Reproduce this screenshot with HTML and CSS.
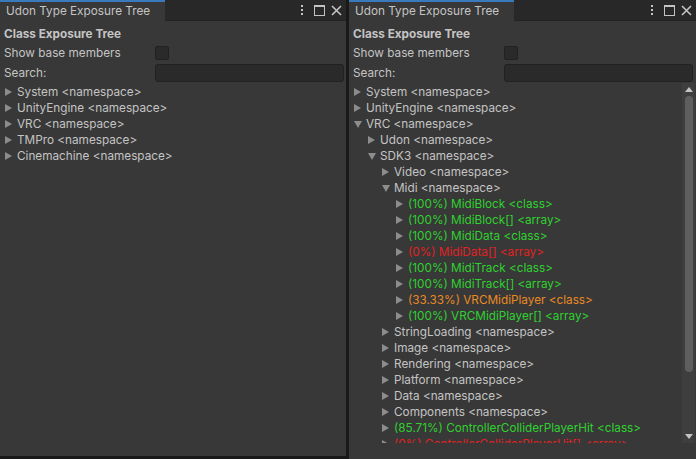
FILE: index.html
```html
<!DOCTYPE html>
<html lang="en">
<head>
    <meta charset="UTF-8">
    <title>Udon Type Exposure Tree</title>
    <link rel="stylesheet" href="styles.css">
</head>
<body>

    <div class="panel left">
        <div class="tabbar">
            <div class="tab">Udon Type Exposure Tree</div>
            <div class="tab-icons">
                <span class="kebab"><i></i><i></i><i></i></span>
                <span class="maxbox"></span>
                <svg class="close" width="11" height="11" viewBox="0 0 11 11"><path d="M1 1 L10 10 M10 1 L1 10" stroke="#c4c4c4" stroke-width="1.6"/></svg>
            </div>
        </div>
        <div class="content">
            <div class="title">Class Exposure Tree</div>
            <div class="field-row"><span class="label">Show base members</span><span class="checkbox"></span></div>
            <div class="field-row search"><span class="label">Search:</span><span class="textbox"></span></div>
            <div class="tree">
                <div class="node l0"><span class="arrow"></span>System &lt;namespace&gt;</div>
                <div class="node l0"><span class="arrow"></span>UnityEngine &lt;namespace&gt;</div>
                <div class="node l0"><span class="arrow"></span>VRC &lt;namespace&gt;</div>
                <div class="node l0"><span class="arrow"></span>TMPro &lt;namespace&gt;</div>
                <div class="node l0"><span class="arrow"></span>Cinemachine &lt;namespace&gt;</div>
            </div>
        </div>
    </div>

    <div class="divider"></div>

    <div class="panel right">
        <div class="tabbar">
            <div class="tab">Udon Type Exposure Tree</div>
            <div class="tab-icons">
                <span class="kebab"><i></i><i></i><i></i></span>
                <span class="maxbox"></span>
                <svg class="close" width="11" height="11" viewBox="0 0 11 11"><path d="M1 1 L10 10 M10 1 L1 10" stroke="#c4c4c4" stroke-width="1.6"/></svg>
            </div>
        </div>
        <div class="content">
            <div class="title">Class Exposure Tree</div>
            <div class="field-row"><span class="label">Show base members</span><span class="checkbox"></span></div>
            <div class="field-row search"><span class="label">Search:</span><span class="textbox"></span></div>
            <div class="tree-wrap">
                <div class="tree scroll">
                    <div class="node l0"><span class="arrow"></span>System &lt;namespace&gt;</div>
                    <div class="node l0"><span class="arrow"></span>UnityEngine &lt;namespace&gt;</div>
                    <div class="node l0"><span class="arrow open"></span>VRC &lt;namespace&gt;</div>
                    <div class="node l1"><span class="arrow"></span>Udon &lt;namespace&gt;</div>
                    <div class="node l1"><span class="arrow open"></span>SDK3 &lt;namespace&gt;</div>
                    <div class="node l2"><span class="arrow"></span>Video &lt;namespace&gt;</div>
                    <div class="node l2"><span class="arrow open"></span>Midi &lt;namespace&gt;</div>
                    <div class="node l3 ok"><span class="arrow"></span>(100%) MidiBlock &lt;class&gt;</div>
                    <div class="node l3 ok"><span class="arrow"></span>(100%) MidiBlock[] &lt;array&gt;</div>
                    <div class="node l3 ok"><span class="arrow"></span>(100%) MidiData &lt;class&gt;</div>
                    <div class="node l3 bad"><span class="arrow"></span>(0%) MidiData[] &lt;array&gt;</div>
                    <div class="node l3 ok"><span class="arrow"></span>(100%) MidiTrack &lt;class&gt;</div>
                    <div class="node l3 ok"><span class="arrow"></span>(100%) MidiTrack[] &lt;array&gt;</div>
                    <div class="node l3 part"><span class="arrow"></span>(33.33%) VRCMidiPlayer &lt;class&gt;</div>
                    <div class="node l3 ok"><span class="arrow"></span>(100%) VRCMidiPlayer[] &lt;array&gt;</div>
                    <div class="node l2"><span class="arrow"></span>StringLoading &lt;namespace&gt;</div>
                    <div class="node l2"><span class="arrow"></span>Image &lt;namespace&gt;</div>
                    <div class="node l2"><span class="arrow"></span>Rendering &lt;namespace&gt;</div>
                    <div class="node l2"><span class="arrow"></span>Platform &lt;namespace&gt;</div>
                    <div class="node l2"><span class="arrow"></span>Data &lt;namespace&gt;</div>
                    <div class="node l2"><span class="arrow"></span>Components &lt;namespace&gt;</div>
                    <div class="node l2 ok"><span class="arrow"></span>(85.71%) ControllerColliderPlayerHit &lt;class&gt;</div>
                    <div class="node l2 bad"><span class="arrow"></span>(0%) ControllerColliderPlayerHit[] &lt;array&gt;</div>
                </div>
                <div class="scrollbar">
                    <span class="sb-up"></span>
                    <span class="sb-thumb"></span>
                    <span class="sb-down"></span>
                </div>
            </div>
        </div>
    </div>

</body>
</html>
```

FILE: styles.css
```css
body {
    margin: 0;
    background: #191919;
    font-family: 'Inter', 'Noto Sans', sans-serif;
    font-size: 11.75px;
    color: #c4c4c4;
    display: flex;
    width: 696px;
    height: 459px;
    overflow: hidden;
}
.panel {
    display: flex;
    flex-direction: column;
    background: #383838;
}
.left {
    width: 346px;
    height: 456px;
}
.right {
    width: 347px;
    height: 459px;
}
.divider {
    width: 3px;
    background: #191919;
}
.tabbar {
    height: 21px;
    background: #282828;
    display: flex;
    justify-content: space-between;
    border-bottom: 1px solid #232323;
    box-sizing: border-box;
}
.tab {
    width: 165px;
    height: 21px;
    box-sizing: border-box;
    background: #383838;
    border-top: 2px solid #3a79bb;
    padding: 1px 0 0 6px;
    line-height: 17px;
    color: #c4c4c4;
}
.tab-icons {
    display: flex;
    align-items: center;
    gap: 6px;
    padding-right: 4px;
    height: 20px;
}
.kebab {
    display: flex;
    flex-direction: column;
    gap: 2px;
    margin-right: 5px;
}
.kebab i {
    width: 2px;
    height: 2px;
    background: #c4c4c4;
}
.maxbox {
    width: 9px;
    height: 8px;
    border: 1px solid #c4c4c4;
    border-top-width: 2px;
}
.close {
    display: block;
}
.content {
    flex: 1;
    display: flex;
    flex-direction: column;
    padding-top: 5px;
    min-height: 0;
}
.title {
    font-weight: bold;
    height: 16px;
    line-height: 16px;
    padding-left: 4px;
    margin-bottom: 3px;
}
.field-row {
    display: flex;
    align-items: center;
    height: 16px;
    padding-left: 4px;
}
.field-row.search {
    height: 18px;
    margin-top: 3px;
}
.label {
    width: 151px;
}
.checkbox {
    width: 12px;
    height: 12px;
    background: #2a2a2a;
    border: 1px solid #212121;
    border-radius: 2px;
}
.textbox {
    width: 187px;
    height: 16px;
    background: #2a2a2a;
    border: 1px solid #212121;
    border-radius: 3px;
}
.tree {
    margin-top: 2px;
}
.tree-wrap {
    display: flex;
    margin-top: 1px;
    height: 360px;
}
.tree.scroll {
    flex: 1;
    margin-top: 0;
    padding-top: 1px;
    overflow: hidden;
}
.node {
    height: 16px;
    line-height: 16px;
    white-space: nowrap;
    display: flex;
    align-items: center;
}
.l0 { padding-left: 5px; }
.l1 { padding-left: 19px; }
.l2 { padding-left: 33px; }
.l3 { padding-left: 47px; }
.arrow {
    width: 0;
    height: 0;
    border-top: 4px solid transparent;
    border-bottom: 4px solid transparent;
    border-left: 7px solid #8c8c8c;
    margin-right: 5px;
}
.arrow.open {
    border-left: 4px solid transparent;
    border-right: 4px solid transparent;
    border-top: 7px solid #8c8c8c;
    border-bottom: 0;
    margin-right: 4px;
}
.ok { color: #2fd12f; }
.bad { color: #e02222; }
.part { color: #e98a24; }
.scrollbar {
    width: 13px;
    background: #3e3e3e;
    display: flex;
    flex-direction: column;
    align-items: center;
    margin-right: 1px;
}
.sb-up, .sb-down {
    width: 0;
    height: 0;
    border-left: 4px solid transparent;
    border-right: 4px solid transparent;
    margin: 4px 0;
}
.sb-up {
    border-bottom: 5px solid #c4c4c4;
}
.sb-down {
    border-top: 5px solid #c4c4c4;
    margin-top: auto;
}
.sb-thumb {
    width: 8px;
    height: 276px;
    background: #5e5e5e;
    border-radius: 4px;
}
```
